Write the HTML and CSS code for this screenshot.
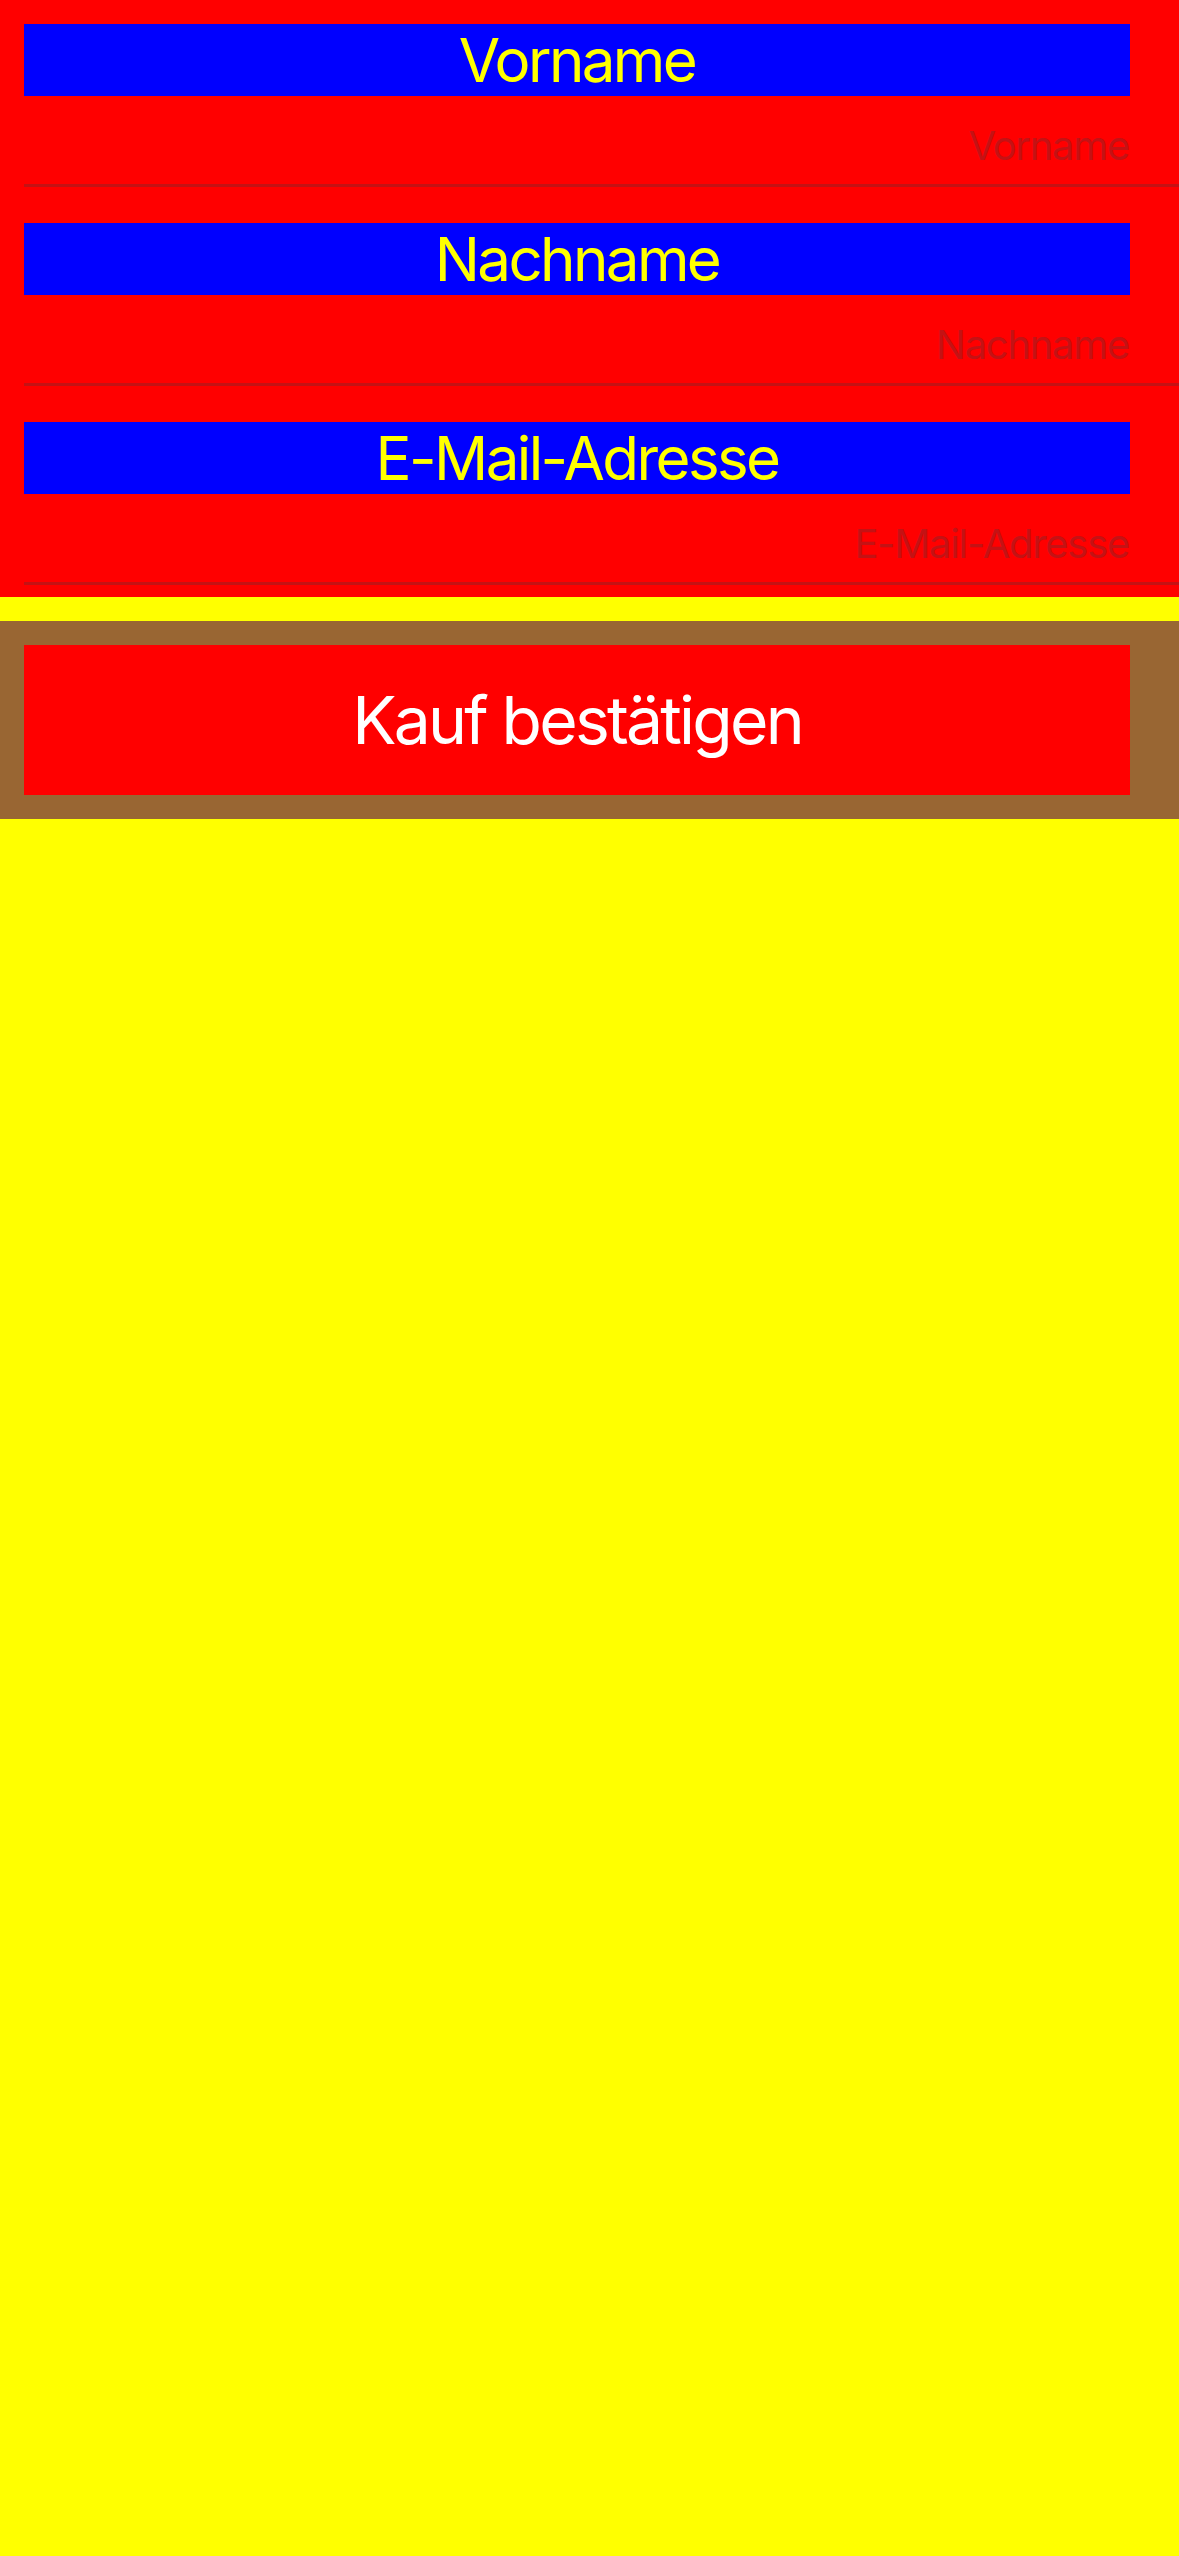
FILE: index.html
```html
<!DOCTYPE html>
<html lang="de">
<head>
<meta charset="utf-8">
<title>Kauf</title>
<link rel="stylesheet" href="styles.css">
</head>
<body>
  <section class="form">
    <div class="row">
      <div class="label">Vorname</div>
      <div class="field"><span class="placeholder">Vorname</span></div>
      <div class="separator"></div>
    </div>
    <div class="row">
      <div class="label">Nachname</div>
      <div class="field"><span class="placeholder">Nachname</span></div>
      <div class="separator"></div>
    </div>
    <div class="row">
      <div class="label">E-Mail-Adresse</div>
      <div class="field"><span class="placeholder">E-Mail-Adresse</span></div>
      <div class="separator"></div>
    </div>
  </section>
  <section class="actions">
    <button class="buy" type="button">Kauf bestätigen</button>
  </section>
</body>
</html>
```
FILE: styles.css
```css
* {
  box-sizing: border-box;
}

html, body {
  margin: 0;
  padding: 0;
}

body {
  background: #ffff00;
  font-family: Inter, "Liberation Sans", sans-serif;
  width: 1179px;
  min-height: 2556px;
}

.form {
  background: #ff0000;
  padding: 24px 0 12px 24px;
  display: flex;
  flex-direction: column;
  gap: 36px;
}

.row {
  display: flex;
  flex-direction: column;
}

.label {
  background: #0000ff;
  color: #ffff00;
  height: 72px;
  margin-right: 49px;
  font-size: 60px;
  line-height: 72px;
  text-align: center;
  letter-spacing: -2.6px;
}

.field {
  height: 88px;
  display: flex;
  justify-content: flex-end;
  align-items: flex-end;
  padding: 0 50px 14px 0;
}

.placeholder {
  font-size: 40px;
  line-height: 48px;
  color: #c41214;
  letter-spacing: -1.3px;
}

.separator {
  height: 3px;
  background: #c41214;
}

.actions {
  margin-top: 24px;
  background: #996633;
  padding: 24px 49px 24px 24px;
}

.buy {
  display: flex;
  align-items: center;
  justify-content: center;
  width: 100%;
  height: 150px;
  border: 0;
  margin: 0;
  padding: 0;
  background: #ff0000;
  color: #ffffff;
  font-family: Inter, "Liberation Sans", sans-serif;
  font-size: 66px;
  line-height: 80px;
  letter-spacing: -2.8px;
}
```
